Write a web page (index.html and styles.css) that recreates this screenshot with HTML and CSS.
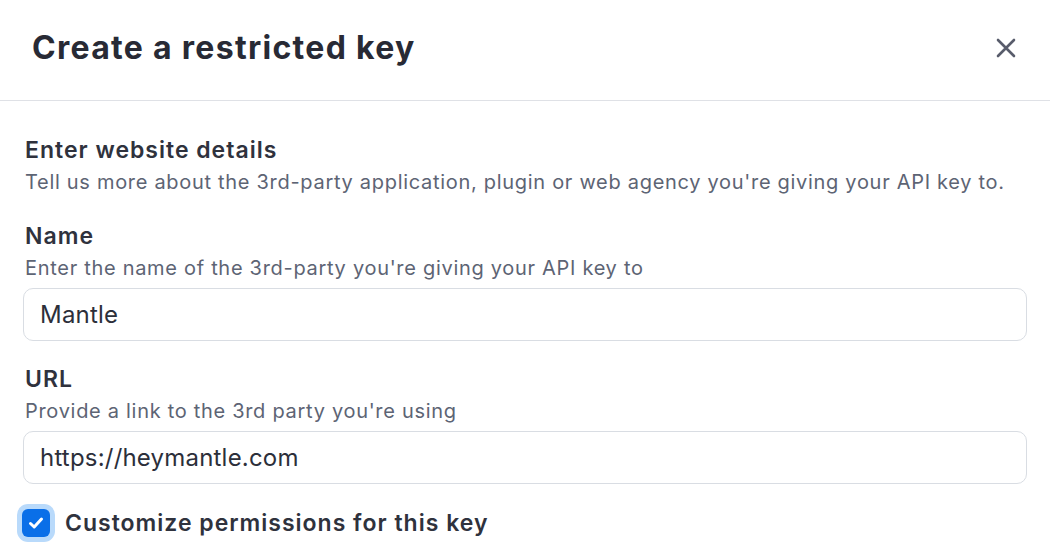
FILE: index.html
```html
<!DOCTYPE html>
<html>
<head>
<meta charset="utf-8">
<link rel="stylesheet" href="styles.css">
</head>
<body>
<div class="modal">
  <header class="modal-header">
    <h1 class="title">Create a restricted key</h1>
    <button class="close" aria-label="Close">
      <svg width="20" height="20" viewBox="0 0 20 20"><path d="M2 2 L18 18 M18 2 L2 18" stroke="#585c6b" stroke-width="2.6" stroke-linecap="round" fill="none"/></svg>
    </button>
  </header>
  <div class="modal-body">
    <div class="group">
      <div class="label">Enter website details</div>
      <div class="desc">Tell us more about the 3rd-party application, plugin or web agency you're giving your API key to.</div>
    </div>
    <div class="group">
      <div class="label">Name</div>
      <div class="desc">Enter the name of the 3rd-party you're giving your API key to</div>
      <div class="input">Mantle</div>
    </div>
    <div class="group">
      <div class="label">URL</div>
      <div class="desc">Provide a link to the 3rd party you're using</div>
      <div class="input">https://heymantle.com</div>
    </div>
    <label class="check-row">
      <span class="checkbox">
        <svg width="18" height="18" viewBox="0 0 18 18"><path d="M3.5 9.5 L7.2 13 L14.5 5" stroke="#fff" stroke-width="3" stroke-linecap="round" stroke-linejoin="round" fill="none"/></svg>
      </span>
      <span class="check-label">Customize permissions for this key</span>
    </label>
  </div>
</div>
</body>
</html>
```
FILE: styles.css
```css
* { box-sizing: border-box; }
html, body { margin: 0; padding: 0; background: #fff; }
body {
  font-family: Inter, "Noto Sans", "Liberation Sans", sans-serif;
  color: #2b2d38;
  width: 1050px;
  height: 560px;
  overflow: hidden;
}
.modal-header {
  height: 101px;
  border-bottom: 1px solid #dfe1e6;
  display: flex;
  align-items: center;
  justify-content: space-between;
  padding: 0 32px 6px 32px;
}
.title {
  margin: 0;
  font-size: 32px;
  font-weight: 700;
  color: #282a35;
  letter-spacing: 1.3px;
}
.close {
  border: 0;
  background: none;
  padding: 0;
  width: 20px;
  height: 20px;
  display: flex;
  margin-right: 2px;
  margin-top: 2px;
}
.modal-body {
  padding: 33px 23px 0 23px;
  display: flex;
  flex-direction: column;
}
.group { display: flex; flex-direction: column; margin-bottom: 22px; }
.label {
  font-size: 23px;
  font-weight: 600;
  line-height: 32px;
  color: #2f323d;
  letter-spacing: 1px;
  padding-left: 2px;
}
.desc {
  font-size: 20px;
  line-height: 32px;
  color: #5d6474;
  letter-spacing: 0.7px;
  padding-left: 2px;
}
.input {
  margin-top: 4px;
  height: 53px;
  border: 1.5px solid #d9dde3;
  border-radius: 10px;
  display: flex;
  align-items: center;
  padding-left: 16px;
  font-size: 24px;
  letter-spacing: 0.2px;
  color: #2c2f3a;
}
.check-row {
  display: flex;
  align-items: center;
  gap: 15px;
  margin-top: 3px;
}
.checkbox {
  width: 28px;
  height: 28px;
  margin-left: -1px;
  border-radius: 6px;
  background: #0a6fe8;
  box-shadow: 0 0 0 5px #b9dafb;
  display: flex;
  align-items: center;
  justify-content: center;
}
.check-label {
  font-size: 23px;
  font-weight: 600;
  letter-spacing: 1px;
  color: #2f323d;
}
```
